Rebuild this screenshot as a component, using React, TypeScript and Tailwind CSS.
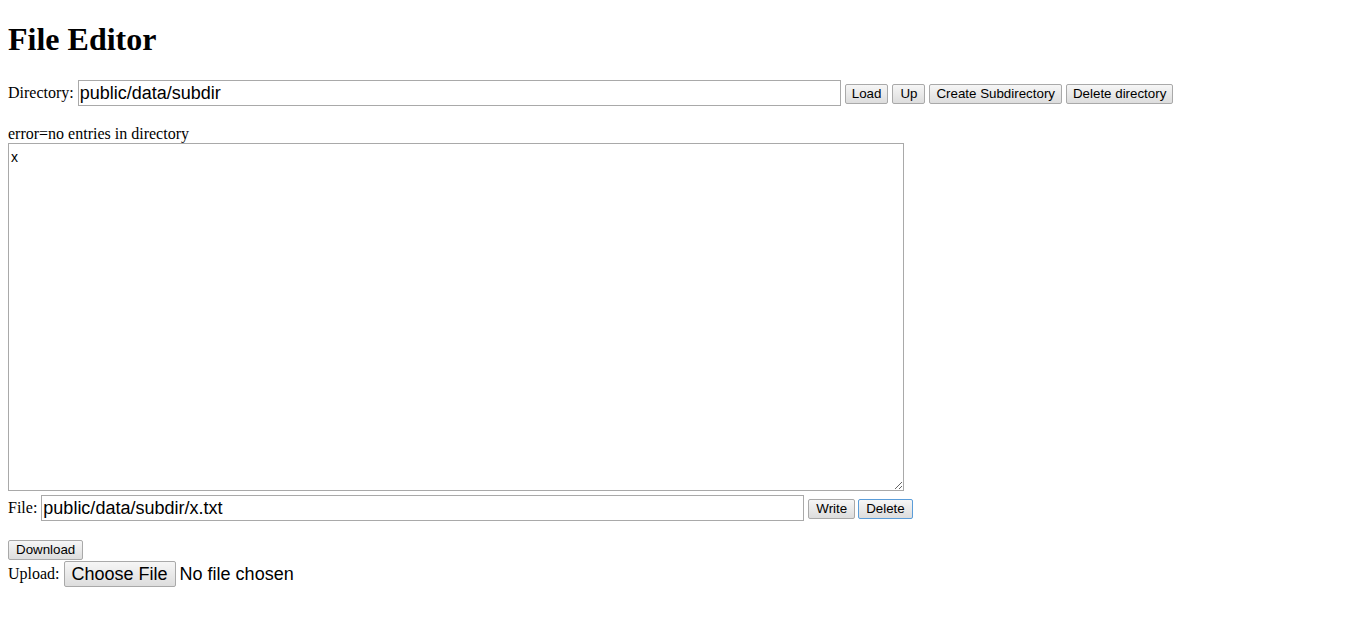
import React from "react";

const btn =
  "h-[20px] px-[6px] border border-[#a9a9a9] rounded-[2px] bg-gradient-to-b from-[#f6f6f6] to-[#dddddd] text-[13.33px] leading-[16px] text-black [font-family:'Liberation_Sans',Arial,sans-serif]";

export default function App() {
  return (
    <div className="bg-white w-[1366px] h-[638px] px-[8px] text-black [font-family:'Liberation_Serif','Times_New_Roman',serif] text-[16px]">
      <h1 className="pt-[21px] text-[32px] font-bold leading-[37px] [font-family:'Liberation_Serif','Times_New_Roman',serif]">
        File Editor
      </h1>
      <div className="mt-[22px] flex items-center h-[26px] gap-[4px]">
        <span className="leading-[18px]">Directory:</span>
        <input
          readOnly
          value="public/data/subdir"
          className="w-[763px] h-[26px] border border-[#a9a9a9] px-[1px] text-[18px] [font-family:'Liberation_Sans',Arial,sans-serif] outline-none"
        />
        <button className={btn + " mt-[2px] px-[6.5px]"}>Load</button>
        <button className={btn + " mt-[2px] px-[7px]"}>Up</button>
        <button className={btn + " mt-[2px]"}>Create Subdirectory</button>
        <button className={btn + " mt-[2px]"}>Delete directory</button>
      </div>
      <div className="mt-[18px] leading-[19px]">error=no entries in directory</div>
      <textarea
        readOnly
        value="x"
        className="block w-[896px] h-[348px] border border-[#a9a9a9] px-[2px] pt-[5px] text-[14px] leading-[16px] [font-family:'Liberation_Sans',Arial,sans-serif] outline-none resize-y mt-0"
      />
      <div className="mt-[4px] flex items-center h-[26px] gap-[4px]">
        <span className="leading-[18px]">File:</span>
        <input
          readOnly
          value="public/data/subdir/x.txt"
          className="w-[763px] h-[26px] border border-[#a9a9a9] px-[1px] text-[18px] [font-family:'Liberation_Sans',Arial,sans-serif] outline-none"
        />
        <button className={btn + " mt-[2px] px-[7px]"}>Write</button>
        <button className={btn.replace("border-[#a9a9a9]", "border-[#5b9dd9]") + " mt-[2px] ml-[-1px] px-[7px]"}>Delete</button>
      </div>
      <div className="mt-[19px] flex h-[20px]">
        <button className={btn + " px-[7px]"}>Download</button>
      </div>
      <div className="flex items-center h-[26px] mt-[1px] gap-[4px]">
        <span className="leading-[18px]">Upload:</span>
        <button className="h-[26px] px-[7px] border border-[#a9a9a9] rounded-[2px] bg-gradient-to-b from-[#f6f6f6] to-[#dddddd] text-[18px] leading-[22px] [font-family:'Liberation_Sans',Arial,sans-serif]">
          Choose File
        </button>
        <span className="text-[18px] [font-family:'Liberation_Sans',Arial,sans-serif]">No file chosen</span>
      </div>
    </div>
  );
}
